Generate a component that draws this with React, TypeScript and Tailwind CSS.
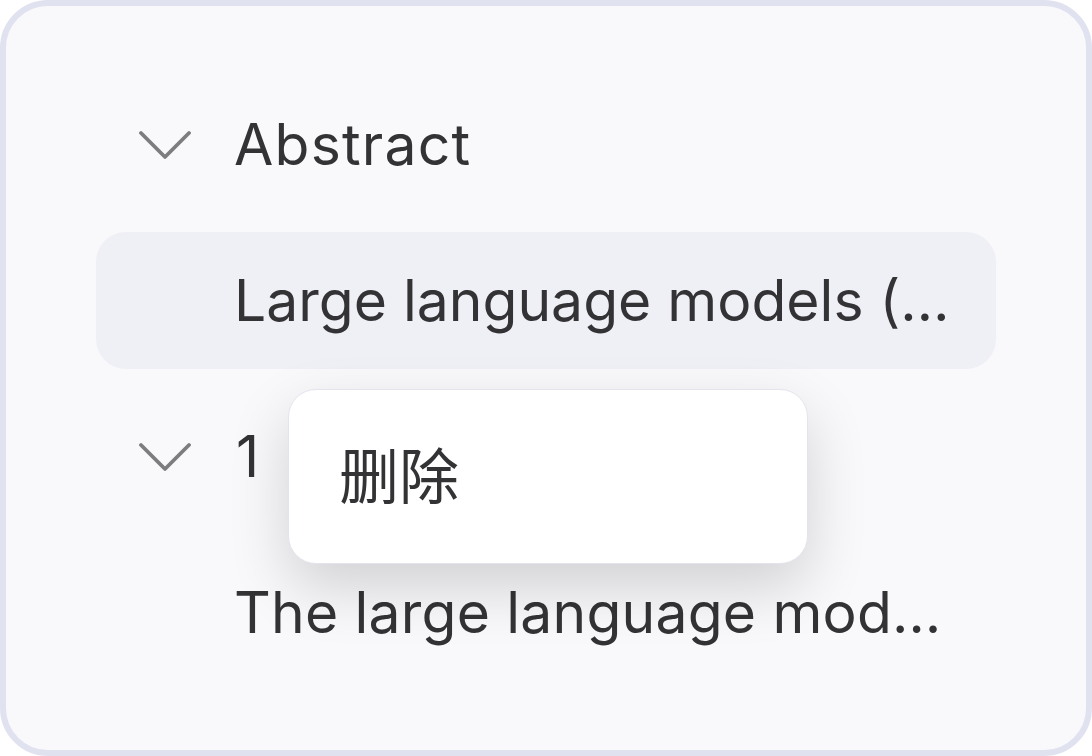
import React from "react";

function Chevron() {
  return (
    <svg width="52" height="30" viewBox="0 0 52 30" className="shrink-0">
      <polyline points="2,3 26,27 50,3" fill="none" stroke="#7d7d80" strokeWidth="3.8" strokeLinecap="round" strokeLinejoin="round" />
    </svg>
  );
}

export default function App() {
  return (
    <div className="w-[1092px] h-[756px] bg-white" style={{ fontFamily: "Inter, 'Noto Sans CJK SC', sans-serif" }}>
      <div className="relative w-full h-full rounded-[48px] border-[6px] border-[#e1e2f0] bg-[#f9f9fc] px-[90px] pt-[70px] overflow-hidden">
        <div className="flex flex-col gap-[19px]">
          <div className="h-[137px] flex items-center pl-[43px] gap-[43px]">
            <Chevron />
            <span className="text-[57px] leading-none text-[#333336] tracking-[1.2px]">Abstract</span>
          </div>
          <div className="h-[137px] flex items-center pl-[138px] rounded-[30px] bg-[#efeff6]">
            <span className="text-[57px] leading-none text-[#333336] whitespace-nowrap">Large language models (…</span>
          </div>
          <div className="h-[137px] flex items-center pl-[43px] gap-[45px]">
            <Chevron />
            <span className="text-[57px] leading-none text-[#333336]">1</span>
          </div>
          <div className="h-[137px] flex items-center pl-[138px]">
            <span className="text-[57px] leading-none text-[#333336] whitespace-nowrap tracking-[0.2px]">The large language mod…</span>
          </div>
        </div>
        <div className="absolute left-[282px] top-[383px] w-[520px] h-[175px] rounded-[28px] bg-white border border-[#e4e4ee] shadow-[0_24px_60px_rgba(0,0,0,0.16)] flex items-center pl-[50px]">
          <span className="text-[60px] leading-none text-[#333336]">删除</span>
        </div>
      </div>
    </div>
  );
}
